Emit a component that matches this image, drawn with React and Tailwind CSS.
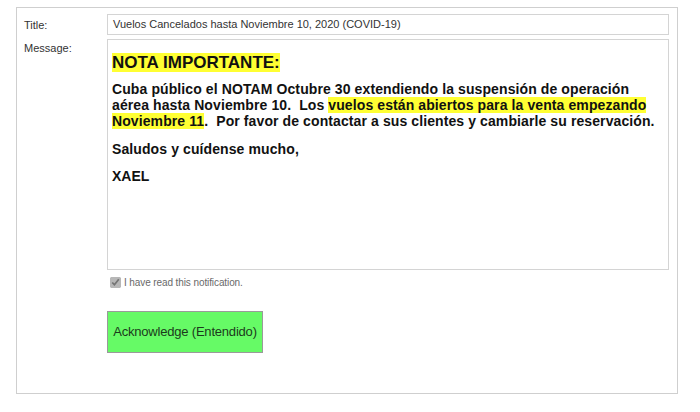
import React, { useState } from 'react';

const Hl = ({ children }) => <span className="bg-[#ffff33]">{children}</span>;

const App = () => {
  const [read, setRead] = useState(true);

  return (
    <div className="w-[700px] h-[412px] bg-white pt-[7px] pl-[16px] font-['Liberation_Sans',Arial,sans-serif]">
      <div className="w-[662px] h-[387px] border border-[#cfcfcf] pl-[7px] pt-[6px]">
        <div className="flex">
          <div className="w-[83px] pt-[3px] text-[11px] text-[#333]">Title:</div>
          <div className="w-[562px] h-[21px] border border-[#d4d4d4] px-[5px] text-[11px] leading-[19px] text-[#333]">
            Vuelos Cancelados hasta Noviembre 10, 2020 (COVID-19)
          </div>
        </div>

        <div className="flex mt-[4px]">
          <div className="w-[83px] pt-[1px] text-[11px] text-[#333]">Message:</div>
          <div className="w-[562px] h-[231px] border border-[#d4d4d4] px-[4px] pt-[12px] text-[#111]">
            <p className="text-[17px] font-bold leading-[21px]">
              <Hl>NOTA IMPORTANTE:</Hl>
            </p>
            <p className="mt-[8px] text-[14px] font-bold leading-[16px] tracking-[0.1px] whitespace-nowrap">
              Cuba público el NOTAM Octubre 30 extendiendo la suspensión de operación
              <br />
              aérea hasta Noviembre 10.&nbsp; Los <Hl>vuelos están abiertos para la venta empezando</Hl>
              <br />
              <Hl>Noviembre 11</Hl>.&nbsp; Por favor de contactar a sus clientes y cambiarle su reservación.
            </p>
            <p className="mt-[12px] text-[14px] font-bold leading-[16px] tracking-[0.1px]">Saludos y cuídense mucho,</p>
            <p className="mt-[11px] text-[14px] font-bold leading-[16px]">XAEL</p>
          </div>
        </div>

        <label className="flex items-center gap-[3px] ml-[86px] mt-[5px] text-[10px] tracking-[-0.1px] text-[#6a6a6a] font-['Liberation_Sans',Arial,sans-serif]">
          <input
            type="checkbox"
            checked={read}
            onChange={(e) => setRead(e.target.checked)}
            className="w-[11px] h-[11px] m-0 accent-[#9a9a9a] opacity-70"
          />
          I have read this notification.
        </label>

        <button className="block ml-[83px] mt-[21px] w-[156px] h-[42px] bg-[#66fa66] border border-[#9a9a9a] text-[13px] tracking-[-0.2px] text-[#1c3a1c] font-['Liberation_Sans',Arial,sans-serif] whitespace-nowrap">
          Acknowledge (Entendido)
        </button>
      </div>
    </div>
  );
};

export default App;
